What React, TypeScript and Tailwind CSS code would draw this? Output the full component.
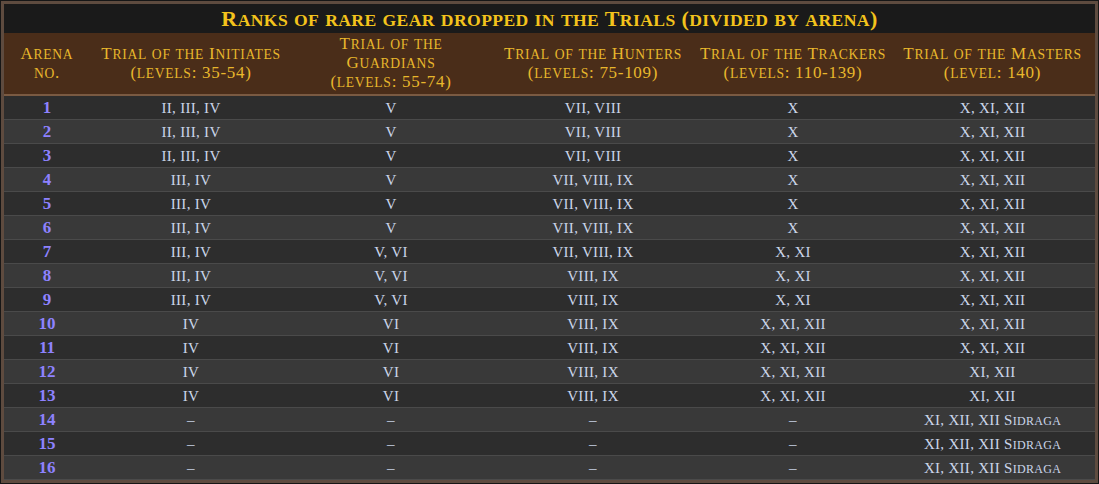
import type { ReactNode } from 'react';

const COLS = [
  { title: ['Arena', 'no.'], w: 'w-[86px]' },
  { title: ['Trial of the Initiates', '(levels: 35-54)'], w: 'w-[202px]' },
  { title: ['Trial of the', 'Guardians', '(levels: 55-74)'], w: 'w-[198px]' },
  { title: ['Trial of the Hunters', '(levels: 75-109)'], w: 'w-[206px]' },
  { title: ['Trial of the Trackers', '(levels: 110-139)'], w: 'w-[194px]' },
  { title: ['Trial of the Masters', '(level: 140)'], w: 'w-[205px]' },
];

const ROWS: string[][] = [
  ['II, III, IV', 'V', 'VII, VIII', 'X', 'X, XI, XII'],
  ['II, III, IV', 'V', 'VII, VIII', 'X', 'X, XI, XII'],
  ['II, III, IV', 'V', 'VII, VIII', 'X', 'X, XI, XII'],
  ['III, IV', 'V', 'VII, VIII, IX', 'X', 'X, XI, XII'],
  ['III, IV', 'V', 'VII, VIII, IX', 'X', 'X, XI, XII'],
  ['III, IV', 'V', 'VII, VIII, IX', 'X', 'X, XI, XII'],
  ['III, IV', 'V, VI', 'VII, VIII, IX', 'X, XI', 'X, XI, XII'],
  ['III, IV', 'V, VI', 'VIII, IX', 'X, XI', 'X, XI, XII'],
  ['III, IV', 'V, VI', 'VIII, IX', 'X, XI', 'X, XI, XII'],
  ['IV', 'VI', 'VIII, IX', 'X, XI, XII', 'X, XI, XII'],
  ['IV', 'VI', 'VIII, IX', 'X, XI, XII', 'X, XI, XII'],
  ['IV', 'VI', 'VIII, IX', 'X, XI, XII', 'XI, XII'],
  ['IV', 'VI', 'VIII, IX', 'X, XI, XII', 'XI, XII'],
  ['–', '–', '–', '–', 'XI, XII, XII Sidraga'],
  ['–', '–', '–', '–', 'XI, XII, XII Sidraga'],
  ['–', '–', '–', '–', 'XI, XII, XII Sidraga'],
];

const serif = "font-['Liberation_Serif','DejaVu_Serif',serif]";

// fake Cinzel: lowercase runs drawn as smaller capitals
function SC({ text }: { text: string }) {
  const parts: ReactNode[] = [];
  text.split(/([a-z]+)/).forEach((p, i) => {
    if (!p) return;
    if (/^[a-z]+$/.test(p)) {
      parts.push(
        <span key={i} className="text-[0.8em]">
          {p.toUpperCase()}
        </span>
      );
    } else {
      parts.push(p);
    }
  });
  return <span className="whitespace-pre">{parts}</span>;
}

export default function App() {
  return (
    <div className="w-[1099px] h-[484px] bg-[#161616] p-px">
      <div className="h-full border-[3px] border-[#5e4b3f] bg-[#2d2d2d] flex flex-col">
        <div
          className={`h-[29px] shrink-0 bg-[#1a1a1a] flex items-center justify-center text-[#f3c31c] text-[22px] font-bold tracking-[0.4px] ${serif}`}
        >
          <SC text="Ranks of rare gear dropped in the Trials (divided by arena)" />
        </div>
        <div className="h-[63px] shrink-0 bg-[#4a2d19] border-b-2 border-[#7a5a42] flex">
          {COLS.map((c, i) => (
            <div
              key={i}
              className={`${c.w} shrink-0 flex flex-col items-center justify-center text-[#e8b72c] text-[17px] leading-[18px] tracking-[0.7px] ${serif}`}
            >
              {c.title.map((t, j) => (
                <SC key={j} text={t} />
              ))}
            </div>
          ))}
        </div>
        <div className="flex flex-col">
          {ROWS.map((r, i) => (
            <div
              key={i}
              className={`h-[24px] shrink-0 flex border-b border-[#4a4a4a] ${i % 2 === 0 ? 'bg-[#2d2d2d]' : 'bg-[#393939]'}`}
            >
              <div
                className={`${COLS[0].w} shrink-0 flex items-center justify-center pt-px text-[#8e82ff] text-[17px] font-bold ${serif}`}
              >
                {i + 1}
              </div>
              {r.map((v, j) => (
                <div
                  key={j}
                  className={`${COLS[j + 1].w} shrink-0 flex items-center justify-center pt-px text-[#cbd6ea] text-[15px] tracking-[0.3px] ${serif}`}
                >
                  <SC text={v} />
                </div>
              ))}
            </div>
          ))}
        </div>
      </div>
    </div>
  );
}
